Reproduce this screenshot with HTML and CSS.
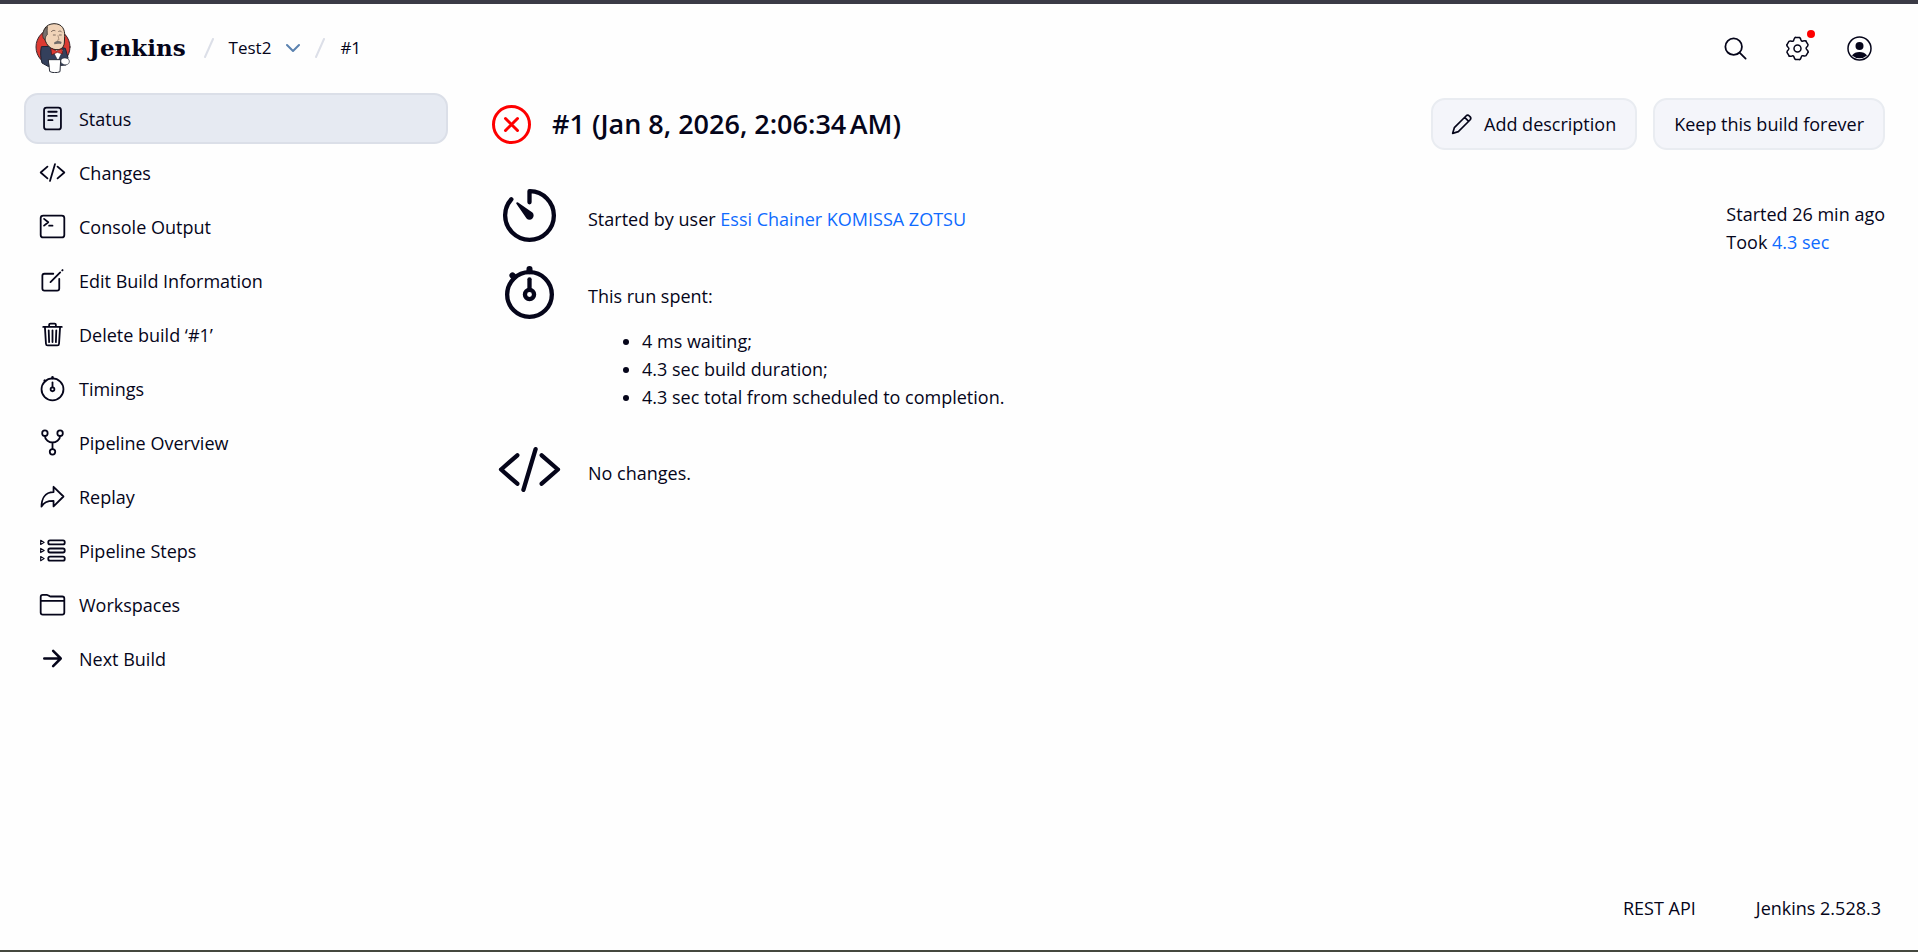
FILE: index.html
```html
<!DOCTYPE html>
<html lang="en">
<head>
<meta charset="UTF-8">
<meta name="viewport" content="width=device-width, initial-scale=1">
<title>Test2 #1 - Jenkins</title>
<link rel="stylesheet" href="styles.css">
</head>
<body>
  <header class="header">
    <a class="brand" href="#">
      <svg class="logo" viewBox="45 40 108 150" aria-hidden="true">
        <ellipse cx="99" cy="112" rx="51" ry="54" fill="#dc3a32" stroke="#3a2a30" stroke-width="3"/>
        <path d="M64 112c-4 16-2 34 2 48l18 10 54-4 6-22-8-28-30-6z" fill="#34405c" stroke="#1d2233" stroke-width="3"/>
        <path d="M96 120l18 34 16-34z" fill="#fff" stroke="#1d2233" stroke-width="2"/>
        <path d="M72 84c-8-20 4-41 30-42 24 0 33 16 32 38l-1 20c-2 14-10 20-22 20-16 0-28-10-33-22z" fill="#f0d3b8" stroke="#2b2420" stroke-width="3"/>
        <path d="M82 52c-11 6-17 20-12 34l6 4c0-8 2-12 6-15-1-9 0-16 0-23z" fill="#77706e" stroke="#2b2420" stroke-width="2"/>
        <path d="M94 66c3-4 7-5 11-3M116 65c4-2 7-1 9 2M100 76h6M118 76h6" fill="none" stroke="#4a3d37" stroke-width="2"/>
        <path d="M114 78l3 12-5 2" fill="none" stroke="#8a7262" stroke-width="2"/>
        <path d="M102 99c6-6 16-6 23-2l-2 6c-8-1-14-1-20 1z" fill="#706b69"/>
        <path d="M93 116l17 8 16-7 2 16-16-5-16 7z" fill="#dc3a32" stroke="#5b1515" stroke-width="2"/>
        <path d="M86 150h36l-2 36c-8 4-24 4-30 0z" fill="#fff" stroke="#2b2f3b" stroke-width="3"/>
        <path d="M124 148c8-6 22-4 24 6 1 10-10 14-18 10-6-2-10-8-6-16z" fill="#fff" stroke="#2b2f3b" stroke-width="2"/>
      </svg>
      <span class="brand-name">Jenkins</span>
    </a>
    <nav class="breadcrumbs" aria-label="Breadcrumb">
      <svg class="slash" viewBox="0 0 10 20" aria-hidden="true"><path d="M9 1L1 19"/></svg>
      <a href="#">Test2</a>
      <button class="crumb-menu" type="button" aria-label="Open menu">
        <svg viewBox="1 0 14 10" aria-hidden="true"><path d="M2 2l6 6 6-6"/></svg>
      </button>
      <svg class="slash" viewBox="0 0 10 20" aria-hidden="true"><path d="M9 1L1 19"/></svg>
      <a href="#">#1</a>
    </nav>
    <div class="header-actions">
      <button class="icon-button" type="button" aria-label="Search">
        <svg class="icon" viewBox="0 0 512 512" aria-hidden="true"><path d="M221 64a157 157 0 10157 157A157 157 0 00221 64zM338 338l110 110"/></svg>
      </button>
      <a class="icon-button" href="#" aria-label="Manage Jenkins">
        <svg class="icon" viewBox="-27 -27 54 54" aria-hidden="true">
          <g class="gear">
            <path id="tooth" d="M-4-22H4Q6-21 7-17Q8-14 11-15Q15-16 17-15"/>
            <use href="#tooth" transform="rotate(60)"/>
            <use href="#tooth" transform="rotate(120)"/>
            <use href="#tooth" transform="rotate(180)"/>
            <use href="#tooth" transform="rotate(240)"/>
            <use href="#tooth" transform="rotate(300)"/>
            <circle r="7"/>
          </g>
        </svg>
        <span class="badge"></span>
      </a>
      <a class="icon-button" href="#" aria-label="User">
        <svg class="icon" viewBox="0 0 54 54" aria-hidden="true"><g class="user"><circle cx="27" cy="27" r="23"/><circle class="solid" cx="27" cy="22" r="8"/><path class="solid" d="M12 41c3-5 9-7 15-7s12 2 15 7a23 23 0 01-30 0z"/></g></svg>
      </a>
    </div>
  </header>

  <div class="page">
    <nav class="side-panel" aria-label="Build">
      <a class="task active" href="#">
        <svg class="icon" viewBox="0 0 512 512" aria-hidden="true"><rect x="96" y="48" width="320" height="416" rx="48"/><path d="M176 128h160M176 208h160M176 288h80"/></svg>
        Status
      </a>
      <a class="task" href="#">
        <svg class="icon" viewBox="0 0 512 512" aria-hidden="true"><path d="M160 368L32 256l128-112M352 368l128-112-128-112M304 96l-96 320"/></svg>
        Changes
      </a>
      <a class="task" href="#">
        <svg class="icon" viewBox="0 0 512 512" aria-hidden="true"><rect x="32" y="48" width="448" height="416" rx="48"/><path d="M96 112l80 64-80 64M192 240h64"/></svg>
        Console Output
      </a>
      <a class="task" href="#">
        <svg class="icon" viewBox="0 0 512 512" aria-hidden="true"><path d="M384 224v184a40 40 0 01-40 40H104a40 40 0 01-40-40V168a40 40 0 0140-40h167M218 286L402 102M440 66l8-8"/></svg>
        Edit Build Information
      </a>
      <a class="task" href="#">
        <svg class="icon" viewBox="0 0 512 512" aria-hidden="true"><path d="M112 112l20 320c1 18 14 32 32 32h184c18 0 31-14 32-32l20-320M80 112h352M192 112V72a24 24 0 0124-24h80a24 24 0 0124 24v40M256 176v224M184 176l8 224M328 176l-8 224"/></svg>
        Delete build ‘#1’
      </a>
      <a class="task" href="#">
        <svg class="icon" viewBox="0 0 512 512" aria-hidden="true"><circle cx="256" cy="272" r="208"/><path d="M256 232v-90"/><circle cx="256" cy="272" r="36"/><path class="thick" d="M256 60V44M116 116l-8-8"/></svg>
        Timings
      </a>
      <a class="task" href="#">
        <svg class="icon" viewBox="0 0 512 512" aria-hidden="true"><circle cx="112" cy="80" r="52"/><circle cx="400" cy="80" r="52"/><circle cx="256" cy="432" r="52"/><path d="M256 256v124M112 132c0 79 81 124 144 124s144-45 144-124"/></svg>
        Pipeline Overview
      </a>
      <a class="task" href="#">
        <svg class="icon" viewBox="0 0 512 512" aria-hidden="true"><path d="M464 256L276 72v100C104 172 48 312 48 448c48-76 96-108 228-108v104z"/></svg>
        Replay
      </a>
      <a class="task" href="#">
        <svg class="icon" viewBox="0 0 512 512" aria-hidden="true"><rect x="176" y="64" width="312" height="76" rx="32"/><rect x="176" y="218" width="312" height="76" rx="32"/><rect x="176" y="372" width="312" height="76" rx="32"/><path class="thin" d="M32 62v80l66-40zM32 216v80l66-40zM32 370v80l66-40z"/></svg>
        Pipeline Steps
      </a>
      <a class="task" href="#">
        <svg class="icon" viewBox="0 0 512 512" aria-hidden="true"><path d="M440 448H72a40 40 0 01-40-40V112a40 40 0 0140-40h76a40 40 0 0122 7l28 18a40 40 0 0022 7h220a40 40 0 0140 40v264a40 40 0 01-40 40zM32 186h448"/></svg>
        Workspaces
      </a>
      <a class="task" href="#">
        <svg class="icon" viewBox="0 0 512 512" aria-hidden="true"><path class="thick" d="M268 112l144 144-144 144M392 256H100"/></svg>
        Next Build
      </a>
    </nav>

    <main class="main-panel">
      <div class="app-bar">
        <svg class="status-icon" viewBox="48 48 416 416" role="img" aria-label="Failed"><circle cx="256" cy="256" r="192"/><path d="M320 320L192 192M192 320l128-128"/></svg>
        <h1>#1 (Jan 8, 2026, 2:06:34&#8239;AM)</h1>
        <div class="controls">
          <button class="button" type="button">
            <svg class="pencil" viewBox="0 0 60 60" aria-hidden="true"><path d="M2 58l5-17L42 6q5-5 10 0l2 2q5 5 0 10L19 53zM38 10l12 12"/></svg>
            Add description
          </button>
          <button class="button" type="button">Keep this build forever</button>
        </div>
      </div>

      <div class="build">
        <div class="summary">
          <section class="entry">
            <svg class="icon" viewBox="0 0 512 512" aria-hidden="true"><path d="M113 128A192 192 0 0064 254c-1 106 86 194 192 194 106 0 192-86 192-192 0-105-84-190-188-192h-4v88"/><path class="solid" d="M233 279l-79-113a8 8 0 0112-12l113 79a32 32 0 01-46 46z"/></svg>
            <div class="entry-text">Started by user <a href="#">Essi Chainer KOMISSA ZOTSU</a></div>
          </section>
          <section class="entry">
            <svg class="icon" viewBox="0 0 512 512" aria-hidden="true"><circle cx="256" cy="272" r="176"/><path d="M256 232v-80"/><circle cx="256" cy="272" r="36"/><path class="thick" d="M256 88V72M132 132l-10-10"/></svg>
            <div class="entry-text">
              This run spent:
              <ul>
                <li>4 ms waiting;</li>
                <li>4.3 sec build duration;</li>
                <li>4.3 sec total from scheduled to completion.</li>
              </ul>
            </div>
          </section>
          <section class="entry">
            <svg class="icon" viewBox="0 0 512 512" aria-hidden="true"><path d="M160 368L32 256l128-112M352 368l128-112-128-112M304 96l-96 320"/></svg>
            <div class="entry-text">No changes.</div>
          </section>
        </div>
        <aside class="timing">
          <div>Started 26 min ago</div>
          <div>Took <a href="#">4.3 sec</a></div>
        </aside>
      </div>
    </main>
  </div>

  <footer class="footer">
    <a href="#">REST API</a>
    <a href="#">Jenkins 2.528.3</a>
  </footer>
</body>
</html>
```
FILE: styles.css
```css
* {
  box-sizing: border-box;
}

body {
  display: flex;
  flex-direction: column;
  min-height: 100vh;
  margin: 0;
  border-top: 4px solid #3b3b46;
  border-bottom: 2px solid #45483f;
  background-color: #fefefe;
  color: #05051a;
  font-family: "Segoe UI", "Open Sans", sans-serif;
  font-size: 18px;
  line-height: 28px;
}

a {
  color: #0f6bff;
  text-decoration: none;
}

button {
  border: none;
  background: none;
  color: inherit;
  font: inherit;
  cursor: pointer;
}

svg {
  flex-shrink: 0;
  fill: none;
  stroke-linecap: round;
  stroke-linejoin: round;
}

.icon {
  width: 27px;
  height: 27px;
  stroke: currentColor;
  stroke-width: 34;
}

.icon .thick {
  stroke-width: 48;
}

.icon .thin {
  stroke-width: 22;
}

.icon .solid {
  fill: currentColor;
  stroke: none;
}

/* Header */

.header {
  display: flex;
  align-items: center;
  height: 88px;
  padding: 0 32px 0 35px;
}

.header a {
  color: inherit;
}

.brand {
  display: flex;
  align-items: center;
  gap: 18px;
}

.logo {
  width: 36px;
  height: 50px;
}

.brand-name {
  font-family: Georgia, "DejaVu Serif", serif;
  font-size: 23px;
  font-weight: bold;
}

.breadcrumbs {
  display: flex;
  align-items: center;
  gap: 15px;
  margin-left: 18px;
  font-size: 17px;
}

.slash {
  width: 10px;
  height: 20px;
  stroke: #dcdfe8;
  stroke-width: 2;
}

.crumb-menu {
  display: flex;
  padding: 0;
}

.crumb-menu svg {
  width: 14px;
  height: 10px;
  stroke: #5b82b0;
  stroke-width: 2;
}

.header-actions {
  display: flex;
  gap: 8px;
  margin-left: auto;
}

.icon-button {
  position: relative;
  display: flex;
  align-items: center;
  justify-content: center;
  width: 54px;
  height: 54px;
  padding: 0;
}

.gear,
.user {
  stroke-width: 3;
}

.badge {
  position: absolute;
  top: 9px;
  right: 9px;
  width: 8px;
  height: 8px;
  border-radius: 50%;
  background-color: #fe0000;
}

/* Layout */

.page {
  display: flex;
  flex: 1;
  gap: 44px;
  padding: 1px 33px 0 24px;
}

.side-panel {
  display: flex;
  flex-direction: column;
  flex: 0 0 424px;
  gap: 3px;
}

.task {
  display: flex;
  align-items: center;
  gap: 13px;
  height: 51px;
  padding: 0 13px;
  border: 2px solid transparent;
  border-radius: 14px;
  color: inherit;
}

.task.active {
  border-color: #dbdfe8;
  background-color: #e6eaf2;
}

.main-panel {
  flex: 1;
  min-width: 0;
}

/* Title and buttons */

.app-bar {
  display: flex;
  align-items: center;
  gap: 21px;
  padding-top: 5px;
}

.status-icon {
  width: 39px;
  height: 39px;
  stroke: #fe0000;
  stroke-width: 32;
}

h1 {
  margin: 0;
  font-size: 27px;
  font-weight: 600;
  line-height: 36px;
}

.controls {
  display: flex;
  gap: 16px;
  margin-left: auto;
}

.button {
  display: flex;
  align-items: center;
  gap: 12px;
  height: 52px;
  padding: 0 19px;
  border: 2px solid #e9ecf1;
  border-radius: 14px;
  background-color: #f4f5fa;
}

.pencil {
  width: 20px;
  height: 20px;
  overflow: visible;
  stroke: currentColor;
  stroke-width: 5;
}

/* Build summary */

.build {
  display: flex;
  justify-content: space-between;
  padding-top: 33px;
}

.summary {
  display: flex;
  flex-direction: column;
  gap: 12px;
  padding-left: 5px;
}

.entry {
  display: flex;
  gap: 26px;
}

.entry .icon {
  width: 65px;
  height: 65px;
}

.entry-text {
  padding-top: 22px;
}

.entry-text ul {
  margin: 17px 0 14px;
  padding-left: 54px;
}

.timing {
  padding-top: 17px;
}

/* Footer */

.footer {
  display: flex;
  justify-content: flex-end;
  gap: 60px;
  padding: 0 37px 28px;
}

.footer a {
  color: inherit;
}
```
